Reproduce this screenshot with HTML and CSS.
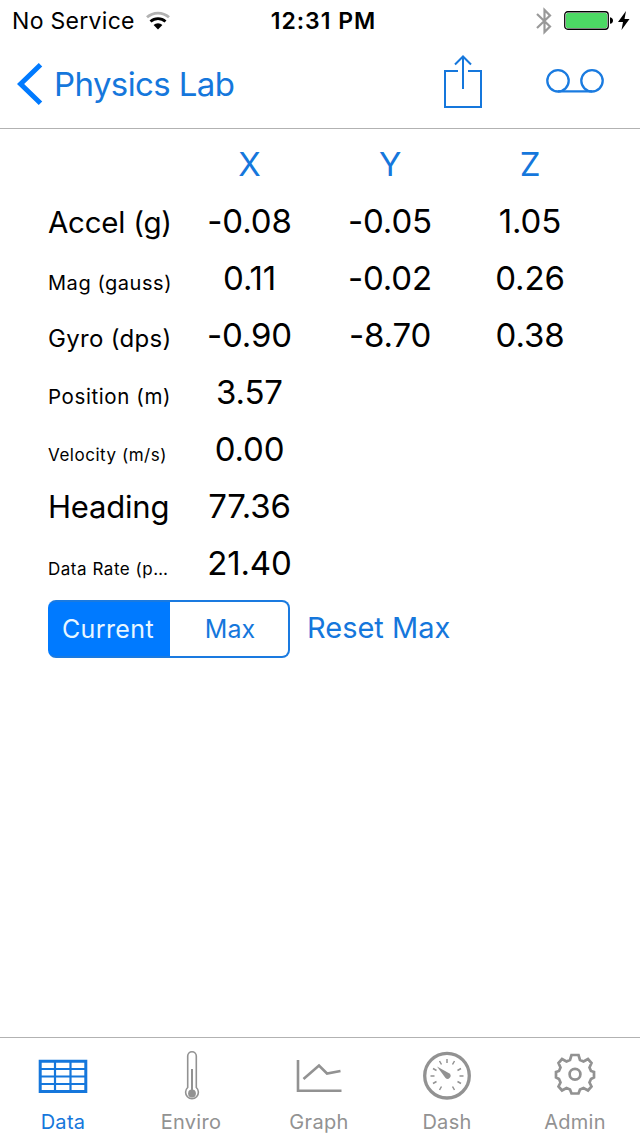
FILE: index.html
```
<!DOCTYPE html>
<html lang="en">
<head>
<meta charset="utf-8">
<title>Physics Lab</title>
<link rel="stylesheet" href="styles.css">
</head>
<body>
<div class="screen">
  <header class="header">
    <div class="status">
      <div class="status-left">
        <span class="carrier">No Service</span>
        <svg class="wifi" width="26" height="20" viewBox="0 0 26 20" fill="none" stroke-width="2.8">
          <path d="M2 6.300A16.500 16.500 0 0 1 24 6.300" stroke="#b2b2b2"/>
          <path d="M5.500 10.500A11 11 0 0 1 20.500 10.500" stroke="#000"/>
          <path d="M13 18.500L8.600 14A6.300 6.300 0 0 1 17.400 14Z" fill="#000"/>
        </svg>
      </div>
      <span class="clock">12:31 PM</span>
      <div class="status-right">
        <svg class="bluetooth" width="16" height="28" viewBox="0 0 16 28" fill="none" stroke="#999" stroke-width="2.2">
          <path d="M1 7L14 19.500L8.500 25V3L14 8.500L1 21"/>
        </svg>
        <svg class="battery" width="50" height="20" viewBox="0 0 50 20">
          <rect x=".75" y=".75" width="43.5" height="17.5" rx="3" fill="#fff" stroke="#000" stroke-width="1.3"/>
          <rect x="2" y="2" width="41" height="15" rx="1.5" fill="#4cd964"/>
          <path d="M46 6.2C50 6.8 50 12.2 46 12.8Z"/>
        </svg>
        <svg class="bolt" width="12" height="20" viewBox="0 0 12 20"><path d="M8 0L0 11H5L3.5 19L11.5 8H6.5Z"/></svg>
      </div>
    </div>
    <nav class="navbar">
      <a class="back">
        <svg width="26" height="42" viewBox="0 0 26 42" fill="none" stroke="#007aff" stroke-width="5"><path d="M23.5 1.8L3.6 21L23.5 40.2"/></svg>
        <span class="back-label">Physics Lab</span>
      </a>
      <div class="actions">
        <svg class="share" width="40" height="54" viewBox="0 0 40 54" fill="none" stroke="#1577dc" stroke-width="2">
          <path d="M15 16H2V52H38V16H25M20 34V2M12 9.5L20 1.5L28 9.5"/>
        </svg>
        <svg class="record" width="58" height="26" viewBox="0 0 58 26" fill="none" stroke="#1a7be0" stroke-width="2.3">
          <circle cx="12" cy="12.8" r="10.7"/><circle cx="46" cy="12.8" r="10.7"/><path d="M12 23.300H46"/>
        </svg>
      </div>
    </nav>
  </header>

  <main class="content">
    <div class="readings">
      <div class="row axes"><span></span><span class="value">X</span><span class="value">Y</span><span class="value">Z</span></div>
      <div class="row"><span class="label accel">Accel (g)</span><span class="value">-0.08</span><span class="value">-0.05</span><span class="value">1.05</span></div>
      <div class="row"><span class="label mag">Mag (gauss)</span><span class="value">0.11</span><span class="value">-0.02</span><span class="value">0.26</span></div>
      <div class="row"><span class="label gyro">Gyro (dps)</span><span class="value">-0.90</span><span class="value">-8.70</span><span class="value">0.38</span></div>
      <div class="row"><span class="label position">Position (m)</span><span class="value">3.57</span></div>
      <div class="row"><span class="label velocity">Velocity (m/s)</span><span class="value">0.00</span></div>
      <div class="row"><span class="label heading">Heading</span><span class="value">77.36</span></div>
      <div class="row"><span class="label rate">Data Rate (p…</span><span class="value">21.40</span></div>
    </div>
    <div class="controls">
      <div class="segmented"><span class="segment selected">Current</span><span class="segment">Max</span></div>
      <span class="reset">Reset Max</span>
    </div>
  </main>

  <footer class="tabbar">
    <a class="tab active">
      <svg width="52" height="56" viewBox="0 0 52 56" fill="none" stroke="#1577dc">
        <path d="M3.200 13.200H48.800V43.500H3.200Z" stroke-width="3"/><path d="M18 13V44M33.5 13V44M3 21H49M3 28.5H49M3 36H49" stroke-width="2.2"/>
      </svg>
      <span>Data</span>
    </a>
    <a class="tab">
      <svg class="thermometer" width="52" height="56" viewBox="0 0 52 56" fill="none" stroke="#929292" stroke-width="1.6">
        <path d="M21.7 39.5V8A4.3 4.3 0 0 1 30.3 8V39.5A6.4 6.4 0 1 1 21.7 39.5Z"/><circle cx="26" cy="45.5" r="3.9" fill="#929292" stroke="none"/><path d="M26 44V21" stroke-width="2"/>
      </svg>
      <span>Enviro</span>
    </a>
    <a class="tab">
      <svg width="52" height="56" viewBox="0 0 52 56" fill="none" stroke="#929292" stroke-width="2.6">
        <path d="M5 12V42.7H48.5M10.5 31L26 17.5L34 25.5L47.5 23"/>
      </svg>
      <span>Graph</span>
    </a>
    <a class="tab">
      <svg width="52" height="56" viewBox="0 0 52 56" fill="none" stroke="#929292">
        <circle cx="26" cy="27.700" r="22.3" stroke-width="3.3"/>
        <path d="M26 11V15M18.5 13L20.5 16.5M33.5 13L31.5 16.5M12 20.5L15.5 22.5M40 20.5L36.500 22.5M9.500 28H13.500M42.500 28H38.500M12 35.500L15.500 33.500M40 35.500L36.500 33.500M18.500 42L20.500 38.500M33.500 42L31.500 38.500" stroke-width="1.5"/>
        <path d="M16 18.500L28.500 25.500A3 3 0 0 1 24.500 30Z" fill="#929292" stroke="none"/>
      </svg>
      <span>Dash</span>
    </a>
    <a class="tab">
      <svg width="52" height="56" viewBox="0 0 52 56" fill="none" stroke="#929292" stroke-width="2.700">
        <path d="M22.500 7H29.500L31 12L34.500 13.500L39 11L42.500 15L40.500 19.500L42 23L45 24V29.500L42 31L40.500 34.500L42.500 38.500L39 42.500L34.500 40L31 41.500L29.500 45.500H22.500L21 41.500L17.500 40L13 42.500L9.500 38.500L11.500 34.500L10 31L7 29.500V24L10 23L11.500 19.500L9.500 15L13 11L17.500 13.500L21 12Z"/><circle cx="26" cy="26.200" r="5.400"/>
      </svg>
      <span>Admin</span>
    </a>
  </footer>
</div>
</body>
</html>
```
FILE: styles.css
```
* { box-sizing: border-box; }
body { margin: 0; background: #fff; color: #000; font-family: Inter, "Liberation Sans", sans-serif; }
svg { display: block; flex: none; }
.screen { width: 640px; height: 1136px; display: flex; flex-direction: column; white-space: nowrap; }
.header { height: 129px; border-bottom: 1px solid #b2b2b2; }
.status { height: 40px; display: grid; grid-template-columns: 1fr auto 1fr; padding: 0 10px 0 12px; }
.status-left, .status-right { display: flex; align-items: center; height: 41px; }
.status-left { gap: 10px; }
.status-right { justify-content: flex-end; }
.carrier { font-size: 23px; letter-spacing: 0.3px; }
.clock { font-size: 23px; font-weight: 600; line-height: 43px; letter-spacing: 1px; padding-left: 5px; }
.bluetooth { margin-right: 12px; }
.battery { margin-right: 4px; }
.navbar { height: 88px; display: flex; justify-content: space-between; padding: 0 36px 0 17px; }
.back { display: flex; align-items: center; gap: 11px; color: #1577dc; height: 88px; }
.back-label { font-size: 33px; line-height: 88px; letter-spacing: -0.600px; }
.actions { display: flex; gap: 63px; padding-top: 15px; }
.record { margin-top: 13px; }
.content { flex: 1; padding: 6px 40px 0 48px; }
.row { height: 57px; line-height: 58px; display: grid; grid-template-columns: 131px 141px 140px 140px; align-items: baseline; }
.value { font-size: 33px; text-align: center; letter-spacing: -0.150px; }
.axes { color: #1577dc; }
.accel { font-size: 29.500px; letter-spacing: -0.250px; }
.mag { font-size: 20px; letter-spacing: 0.550px; }
.gyro { font-size: 24px; letter-spacing: 0.300px; }
.position { font-size: 20.500px; letter-spacing: 0.600px; }
.velocity, .rate { font-size: 17px; letter-spacing: 0.530px; }
.heading { font-size: 31px; letter-spacing: -0.200px; }
.controls { display: flex; gap: 17px; padding-top: 9px; }
.segmented { width: 242px; height: 58px; display: flex; border: 2px solid #1a7ae0; border-radius: 8px; overflow: hidden; background: linear-gradient(90deg, #007aff 50%, #fff 50%); }
.segment { flex: 1; text-align: center; line-height: 55px; font-size: 25px; color: #1577dc; padding-left: 2px; }
.selected { flex: 0 0 120px; background: #007aff; color: #e8f6ff; letter-spacing: 0.400px; padding: 0 4px 0 0; }
.segmented:has(.selected:first-child) { border-left-color: #007aff; }
.reset { color: #1577dc; font-size: 29px; line-height: 56px; }
.tabbar { height: 99px; border-top: 1px solid #b2b2b2; display: grid; grid-template-columns: repeat(5, 128px); }
.tab { display: flex; flex-direction: column; align-items: center; padding: 10px 2px 0 0; color: #929292; font-size: 20px; }
.tab span { line-height: 24px; margin-top: 6px; letter-spacing: 0.300px; }
.thermometer { margin-left: 2px; }
.active { color: #1577dc; }
```
